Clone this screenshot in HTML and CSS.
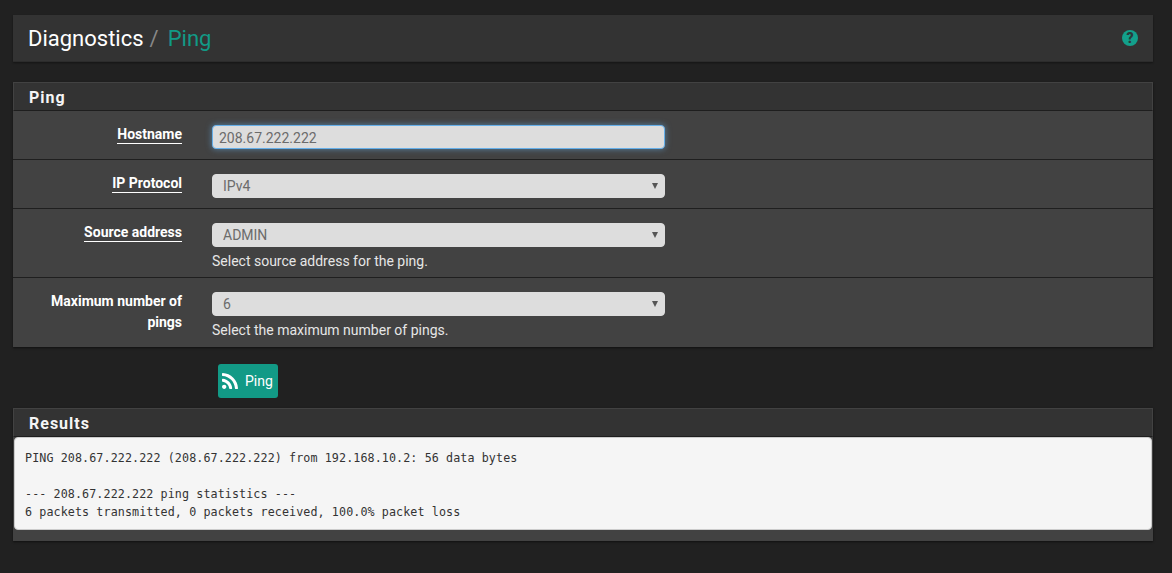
FILE: index.html
```html
<!DOCTYPE html>
<html lang="en">
<head>
<meta charset="utf-8">
<title>Diagnostics / Ping</title>
<link rel="stylesheet" href="styles.css">
</head>
<body>
<header class="page-header">
  <h1 class="crumbs"><span>Diagnostics</span><span class="sep">/</span><span class="current">Ping</span></h1>
  <a class="help" href="#" aria-label="Help">
    <svg class="help-icon" viewBox="0 0 16 16"><circle cx="8" cy="8" r="8" fill="#13a08b"/></svg>
    <span class="help-mark">?</span>
  </a>
</header>
<section class="panel">
  <h2 class="panel-title">Ping</h2>
  <div class="row">
    <label class="label"><span class="label-text">Hostname</span></label>
    <div class="field"><input class="control input" type="text" value="208.67.222.222" autofocus></div>
  </div>
  <div class="row">
    <label class="label"><span class="label-text">IP Protocol</span></label>
    <div class="field"><div class="select"><select class="control"><option>IPv4</option></select></div></div>
  </div>
  <div class="row">
    <label class="label"><span class="label-text">Source address</span></label>
    <div class="field"><div class="select"><select class="control"><option>ADMIN</option></select></div>
      <p class="hint">Select source address for the ping.</p></div>
  </div>
  <div class="row last">
    <label class="label"><span class="label-plain">Maximum number of pings</span></label>
    <div class="field"><div class="select"><select class="control"><option>6</option></select></div>
      <p class="hint">Select the maximum number of pings.</p></div>
  </div>
</section>
<div class="actions">
  <button class="btn" type="button">
    <svg class="rss" viewBox="0 0 1408 1408"><path fill="#fff" d="M384 1216q0 80-56 136t-136 56-136-56-56-136 56-136 136-56 136 56 56 136zm512 123q2 28-17 48-18 21-47 21h-135q-25 0-43-16.500t-20-41.500q-22-229-184.500-391.500t-391.500-184.500q-25-2-41.500-20t-16.500-43v-135q0-29 21-47 17-17 43-17h5q160 13 306 80.500t259 181.500q114 113 181.500 259t80.500 306zm512 2q2 27-18 47-18 20-46 20h-143q-26 0-44.500-17.500t-19.500-42.500q-12-215-101-408.500t-231.500-336-336-231.500-408.500-102q-25-1-42.500-19.500t-17.500-43.500v-143q0-28 20-46 18-18 44-18h3q262 13 501.500 120t425.500 294q187 186 294 425.500t120 501.500z"/></svg>
    <span>Ping</span>
  </button>
</div>
<section class="panel results">
  <h2 class="panel-title">Results</h2>
  <pre class="output">PING 208.67.222.222 (208.67.222.222) from 192.168.10.2: 56 data bytes

--- 208.67.222.222 ping statistics ---
6 packets transmitted, 0 packets received, 100.0% packet loss</pre>
</section>
</body>
</html>
```
FILE: styles.css
```css
* { box-sizing: border-box; }
html, body { margin: 0; }
body {
  background: #212121;
  color: #fff;
  font-family: Roboto, "Liberation Sans", sans-serif;
  font-size: 14px;
  padding: 15px 19px 0 13px;
  height: 573px;
  overflow: hidden;
}
.page-header {
  height: 47px;
  background: #333;
  box-shadow: 0 1px 2px rgba(0,0,0,.4);
  border-bottom: 1px solid #2c2c2c;
  display: flex;
  align-items: center;
  justify-content: space-between;
  padding: 0 15px;
  margin-bottom: 20px;
}
.crumbs { margin: 0; font-size: 22px; font-weight: 400; line-height: 47px; color: #fff; display: flex; }
.sep { color: #888; margin: 0 9px 0 6px; }
.current { color: #129a86; }
.help { position: relative; width: 16px; height: 16px; display: block; }
.help-icon { width: 16px; height: 16px; display: block; }
.help-mark { position: absolute; inset: 0; text-align: center; font-size: 14px; font-weight: 900; line-height: 16px; color: #2a3a3a; }
.panel { background: #424242; box-shadow: 0 1px 2px rgba(0,0,0,.5); }
.panel-title {
  margin: 0;
  height: 29px;
  padding: 0 15px;
  background: #333;
  border: 1px solid #424242;
  border-bottom: 1px solid #1e1e1e;
  font-size: 16px;
  font-weight: 700;
  letter-spacing: 1px;
  line-height: 29px;
  color: #f5f5f5;
}
.row {
  display: flex;
  border-bottom: 1px solid #1f1f1f;
  padding: 14px 0 6px;
  min-height: 49px;
}
.row.last { border-bottom: 0; padding-bottom: 7px; }
.label { width: 169px; text-align: right; font-weight: 700; flex: none; line-height: 21px; margin-top: -1px; }
.label-text { border-bottom: 1px solid #fff; padding-bottom: 1px; }
.label-plain { display: block; }
.field { margin-left: 30px; width: 453px; }
.control {
  display: block;
  width: 453px;
  height: 24px;
  border: 1px solid #ddd;
  border-radius: 4px;
  background: #ddd;
  color: #6b6b6b;
  font-family: Roboto, "Liberation Sans", sans-serif;
  font-size: 14px;
  padding: 0 10px;
  appearance: none;
  outline: 0;
}
.input {
  padding: 1px 6px 0;
  border-color: #66afe9;
  box-shadow: 0 0 6px rgba(102,175,233,.6);
  caret-color: #333;
}
.select { position: relative; }
.select::after {
  content: "";
  position: absolute;
  right: 7px;
  top: 9px;
  border-left: 3px solid transparent;
  border-right: 3px solid transparent;
  border-top: 6px solid #555;
}
.hint { margin: 5px 0 0; line-height: 19px; color: #e6e6e6; }
.actions { padding: 17px 0 10px 205px; }
.btn {
  display: flex;
  align-items: center;
  width: 60px;
  height: 34px;
  padding: 0 4px;
  background: #129a86;
  border: 0;
  border-radius: 3px;
  color: #fff;
  font-family: Roboto, "Liberation Sans", sans-serif;
  font-size: 14px;
}
.rss { width: 16px; height: 16px; margin-right: 7px; flex: none; }
.results { padding-bottom: 11px; }
.output {
  margin: 0 1px;
  height: 93px;
  padding: 11px 10px 0;
  background: #f5f5f5;
  border: 1px solid #ccc;
  border-radius: 4px;
  color: #333;
  font-family: "DejaVu Sans Mono", monospace;
  font-size: 11.7px;
  letter-spacing: .1px;
  line-height: 18px;
}
```
